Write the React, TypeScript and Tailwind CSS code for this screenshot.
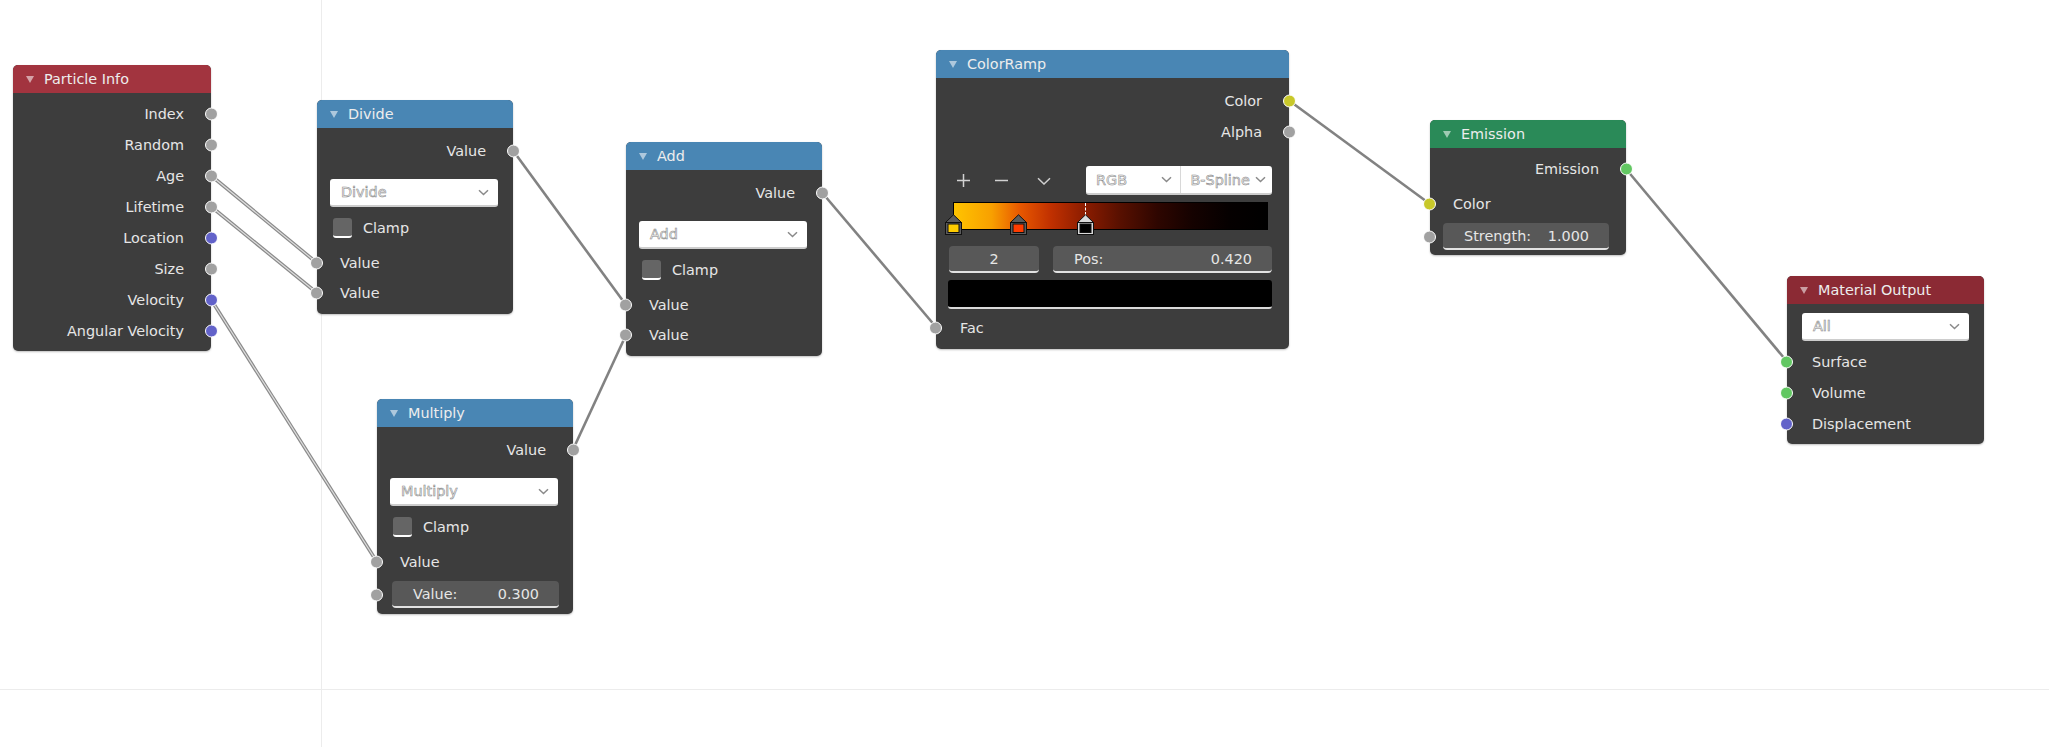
import React from 'react';

type Sock = 'gray' | 'blue' | 'yellow' | 'green';

const sockBg: Record<Sock, string> = {
  gray: 'bg-[#a1a1a1]',
  blue: 'bg-[#6262c9]',
  yellow: 'bg-[#c8c82a]',
  green: 'bg-[#62c762]',
};

const Socket: React.FC<{ side: 'in' | 'out'; color?: Sock }> = ({ side, color = 'gray' }) => (
  <span
    className={`absolute top-1/2 h-[13px] w-[13px] -translate-y-1/2 rounded-full border-[1.5px] border-white ${sockBg[color]} ${
      side === 'in' ? 'left-[-7px]' : 'right-[-7px]'
    }`}
  />
);

const Chevron: React.FC<{ className?: string }> = ({ className = 'stroke-[#8a8a8a]' }) => (
  <svg width="11" height="7" viewBox="0 0 11 7" className={className} fill="none">
    <path d="M1 1.2 5.5 5.5 10 1.2" strokeWidth="1.5" />
  </svg>
);

// text sits a hair low in Blender's widgets
const Txt: React.FC<{ children: React.ReactNode; className?: string }> = ({ children, className = '' }) => (
  <span className={`relative top-[1px] ${className}`}>{children}</span>
);

// node frame: header strip + dark body
const Node: React.FC<{ pos: string; title: string; tone: string; children: React.ReactNode }> = ({
  pos,
  title,
  tone,
  children,
}) => (
  <div
    className={`absolute flex flex-col rounded-[5px] bg-[#3d3d3d] font-['DejaVu_Sans',sans-serif] text-[14.4px] text-[#e6e6e6] shadow-[0_1px_2px_rgba(0,0,0,0.25)] ${pos}`}
  >
    <div className={`flex h-[28px] items-center gap-[10px] rounded-t-[5px] pl-[13px] text-[#ededed] ${tone}`}>
      <svg width="8" height="7" viewBox="0 0 8 7">
        <path d="M0 0h8L4 7z" fill="rgba(255,255,255,0.55)" />
      </svg>
      <Txt>{title}</Txt>
    </div>
    {children}
  </div>
);

const OutRow: React.FC<{ label: string; color?: Sock; h?: string }> = ({ label, color, h = 'h-[31px]' }) => (
  <div className={`relative flex items-center justify-end pr-[27px] ${h}`}>
    <Txt>{label}</Txt>
    <Socket side="out" color={color} />
  </div>
);

const InRow: React.FC<{ label: string; color?: Sock; className?: string }> = ({ label, color, className = '' }) => (
  <div className={`relative flex h-[30px] items-center pl-[23px] ${className}`}>
    <Txt>{label}</Txt>
    <Socket side="in" color={color} />
  </div>
);

const ghost = 'text-[#f4f4f4] [-webkit-text-stroke:0.55px_#868686]';

const Dropdown: React.FC<{ label: string; className?: string }> = ({ label, className = '' }) => (
  <div
    className={`flex h-[28px] items-center justify-between rounded-[3px] border-b-2 border-[#cdcdcd] bg-white pl-[11px] pr-[9px] ${className}`}
  >
    <Txt className={ghost}>{label}</Txt>
    <Chevron />
  </div>
);

const Clamp: React.FC = () => (
  <div className="mt-[8px] flex h-[26px] items-center gap-[11px] pl-[16px]">
    <span className="h-[20px] w-[19px] rounded-[3px] border-b-2 border-white bg-[#656565]" />
    <Txt>Clamp</Txt>
  </div>
);

const Field: React.FC<{ label: string; value: string; className?: string }> = ({ label, value, className = '' }) => (
  <div
    className={`flex h-[27px] items-center justify-between rounded-[4px] border-b-2 border-[#e2e2e2] bg-[#585858] pl-[21px] pr-[20px] ${className}`}
  >
    <Txt>{label}</Txt>
    <Txt>{value}</Txt>
  </div>
);

const MathNode: React.FC<{ pos: string; title: string; last?: React.ReactNode }> = ({ pos, title, last }) => (
  <Node pos={pos} title={title} tone="bg-[#4986b4]">
    <div className="flex flex-col pb-[6px] pt-[7px]">
      <OutRow label="Value" />
      <Dropdown label={title} className="ml-[13px] mr-[15px] mt-[13px]" />
      <Clamp />
      <InRow label="Value" className="mt-[7px]" />
      {last ?? <InRow label="Value" />}
    </div>
  </Node>
);

const Marker: React.FC<{ fill: string; pos: string; active?: boolean }> = ({ fill, pos, active }) => (
  <svg width="17" height="21" viewBox="0 0 17 21" className={`absolute top-[12px] ${pos}`}>
    <path d="M0.5 8.5 8.5 0.8 16.5 8.5z" fill={active ? '#d9d9d9' : '#5d5d5d'} stroke="#111" />
    <rect x="0.5" y="8.5" width="16" height="12" fill={active ? '#d9d9d9' : '#5d5d5d'} stroke="#111" />
    <rect x="3" y="10" width="11" height="8.5" fill={fill} stroke="#111" />
  </svg>
);

const grayLink: [number, number, number, number][] = [
  [513, 150.5, 626, 305],
  [573, 449.5, 626, 335],
  [822, 192.5, 936, 327],
  [1289, 100.5, 1430, 204],
  [1626, 169, 1787, 361.5],
];

const doubleLink: [number, number, number, number][] = [
  [211, 175.5, 317, 263],
  [211, 206.5, 317, 293],
  [211, 299.5, 377, 562],
];

export default function App() {
  return (
    <div className="relative h-[747px] w-[2049px] overflow-hidden bg-white">
      {/* faint canvas grid */}
      <div className="absolute bottom-0 left-[321px] top-0 w-px bg-[#ececec]" />
      <div className="absolute left-0 right-0 top-[689px] h-px bg-[#ececec]" />

      <svg className="absolute inset-0" width="2049" height="747">
        {grayLink.map(([x1, y1, x2, y2], i) => (
          <line key={i} x1={x1} y1={y1} x2={x2} y2={y2} stroke="#828282" strokeWidth="2.6" />
        ))}
        {doubleLink.map(([x1, y1, x2, y2], i) => (
          <g key={i}>
            <line x1={x1} y1={y1} x2={x2} y2={y2} stroke="#8a8a8a" strokeWidth="3.6" />
            <line x1={x1} y1={y1} x2={x2} y2={y2} stroke="#dedede" strokeWidth="1.2" />
          </g>
        ))}
      </svg>

      <Node pos="left-[13px] top-[65px] w-[198px]" title="Particle Info" tone="bg-[#a2343f]">
        <div className="flex flex-col pb-[5px] pt-[5px]">
          <OutRow label="Index" />
          <OutRow label="Random" />
          <OutRow label="Age" />
          <OutRow label="Lifetime" />
          <OutRow label="Location" color="blue" />
          <OutRow label="Size" />
          <OutRow label="Velocity" color="blue" />
          <OutRow label="Angular Velocity" color="blue" />
        </div>
      </Node>

      <MathNode pos="left-[317px] top-[100px] w-[196px]" title="Divide" />
      <MathNode pos="left-[626px] top-[142px] w-[196px]" title="Add" />
      <MathNode
        pos="left-[377px] top-[399px] w-[196px]"
        title="Multiply"
        last={
          <div className="relative mt-[4px]">
            <Socket side="in" />
            <Field label="Value:" value="0.300" className="ml-[15px] mr-[14px]" />
          </div>
        }
      />

      <Node pos="left-[936px] top-[50px] w-[353px]" title="ColorRamp" tone="bg-[#4986b4]">
        <div className="flex flex-col pb-[6px] pt-[7px]">
          <OutRow label="Color" color="yellow" />
          <OutRow label="Alpha" />

          <div className="mt-[19px] flex h-[29px] items-center pl-[17px] pr-[17px]">
            <span className="flex w-[20px] justify-center">
              <svg width="13" height="13" viewBox="0 0 13 13" className="stroke-[#d2d2d2]">
                <path d="M6.5 0v13M0 6.5h13" strokeWidth="1.5" />
              </svg>
            </span>
            <span className="ml-[18px] flex w-[20px] justify-center">
              <svg width="13" height="13" viewBox="0 0 13 13" className="stroke-[#d2d2d2]">
                <path d="M0 6.5h13" strokeWidth="1.5" />
              </svg>
            </span>
            <span className="ml-[23px] flex w-[20px] justify-center">
              <svg width="14" height="8" viewBox="0 0 14 8" fill="none" className="stroke-[#cfcfcf]">
                <path d="M1 1.2 7 7 13 1.2" strokeWidth="1.5" />
              </svg>
            </span>
            <div className="ml-auto flex h-[29px] w-[186px] rounded-[3px] border-b-2 border-[#cdcdcd] bg-white">
              <div className="flex flex-1 items-center justify-between border-r border-[#d8d8d8] pl-[10px] pr-[8px]">
                <Txt className={ghost}>RGB</Txt>
                <Chevron />
              </div>
              <div className="flex flex-1 items-center justify-between pl-[10px] pr-[6px]">
                <Txt className={ghost}>B-Spline</Txt>
                <Chevron />
              </div>
            </div>
          </div>

          <div className="relative ml-[17px] mr-[21px] mt-[7px] h-[32px]">
            <div className="h-[28px] border border-black bg-[linear-gradient(to_right,#ffc400_0%,#f8a000_12%,#e85800_21%,#c03000_31%,#8a1c00_42%,#581000_53%,#2e0600_65%,#150200_76%,#050000_88%,#000_100%)]" />
            <div className="absolute left-[132px] top-[1px] h-[12px] border-l border-dashed border-white" />
            <Marker fill="#ffcc00" pos="left-[-8px]" />
            <Marker fill="#ff3c00" pos="left-[57px]" />
            <Marker fill="#000" pos="left-[124px]" active />
          </div>

          <div className="ml-[13px] mr-[17px] mt-[12px] flex gap-[14px]">
            <div className="flex h-[27px] w-[90px] items-center justify-center rounded-[4px] border-b-2 border-[#e2e2e2] bg-[#585858]">
              <Txt>2</Txt>
            </div>
            <Field label="Pos:" value="0.420" className="flex-1" />
          </div>

          <div className="ml-[12px] mr-[17px] mt-[7px] h-[29px] rounded-[3px] border-b-2 border-[#dadada] bg-black" />

          <InRow label="Fac" className="mt-[4px] pl-[24px]" />
        </div>
      </Node>

      <Node pos="left-[1430px] top-[120px] w-[196px]" title="Emission" tone="bg-[#2a8a58]">
        <div className="flex flex-col pb-[5px] pt-[6px]">
          <OutRow label="Emission" color="green" h="h-[30px]" />
          <InRow label="Color" color="yellow" className="mt-[5px]" />
          <div className="relative mt-[4px]">
            <Socket side="in" />
            <Field label="Strength:" value="1.000" className="ml-[13px] mr-[17px]" />
          </div>
        </div>
      </Node>

      <Node pos="left-[1787px] top-[276px] w-[197px]" title="Material Output" tone="bg-[#8b2a34]">
        <div className="flex flex-col pb-[5px] pt-[9px]">
          <Dropdown label="All" className="mx-[15px]" />
          <div className="mt-[5px] flex flex-col">
            <InRow label="Surface" color="green" className="h-[31px] pl-[25px]" />
            <InRow label="Volume" color="green" className="h-[31px] pl-[25px]" />
            <InRow label="Displacement" color="blue" className="h-[31px] pl-[25px]" />
          </div>
        </div>
      </Node>
    </div>
  );
}
